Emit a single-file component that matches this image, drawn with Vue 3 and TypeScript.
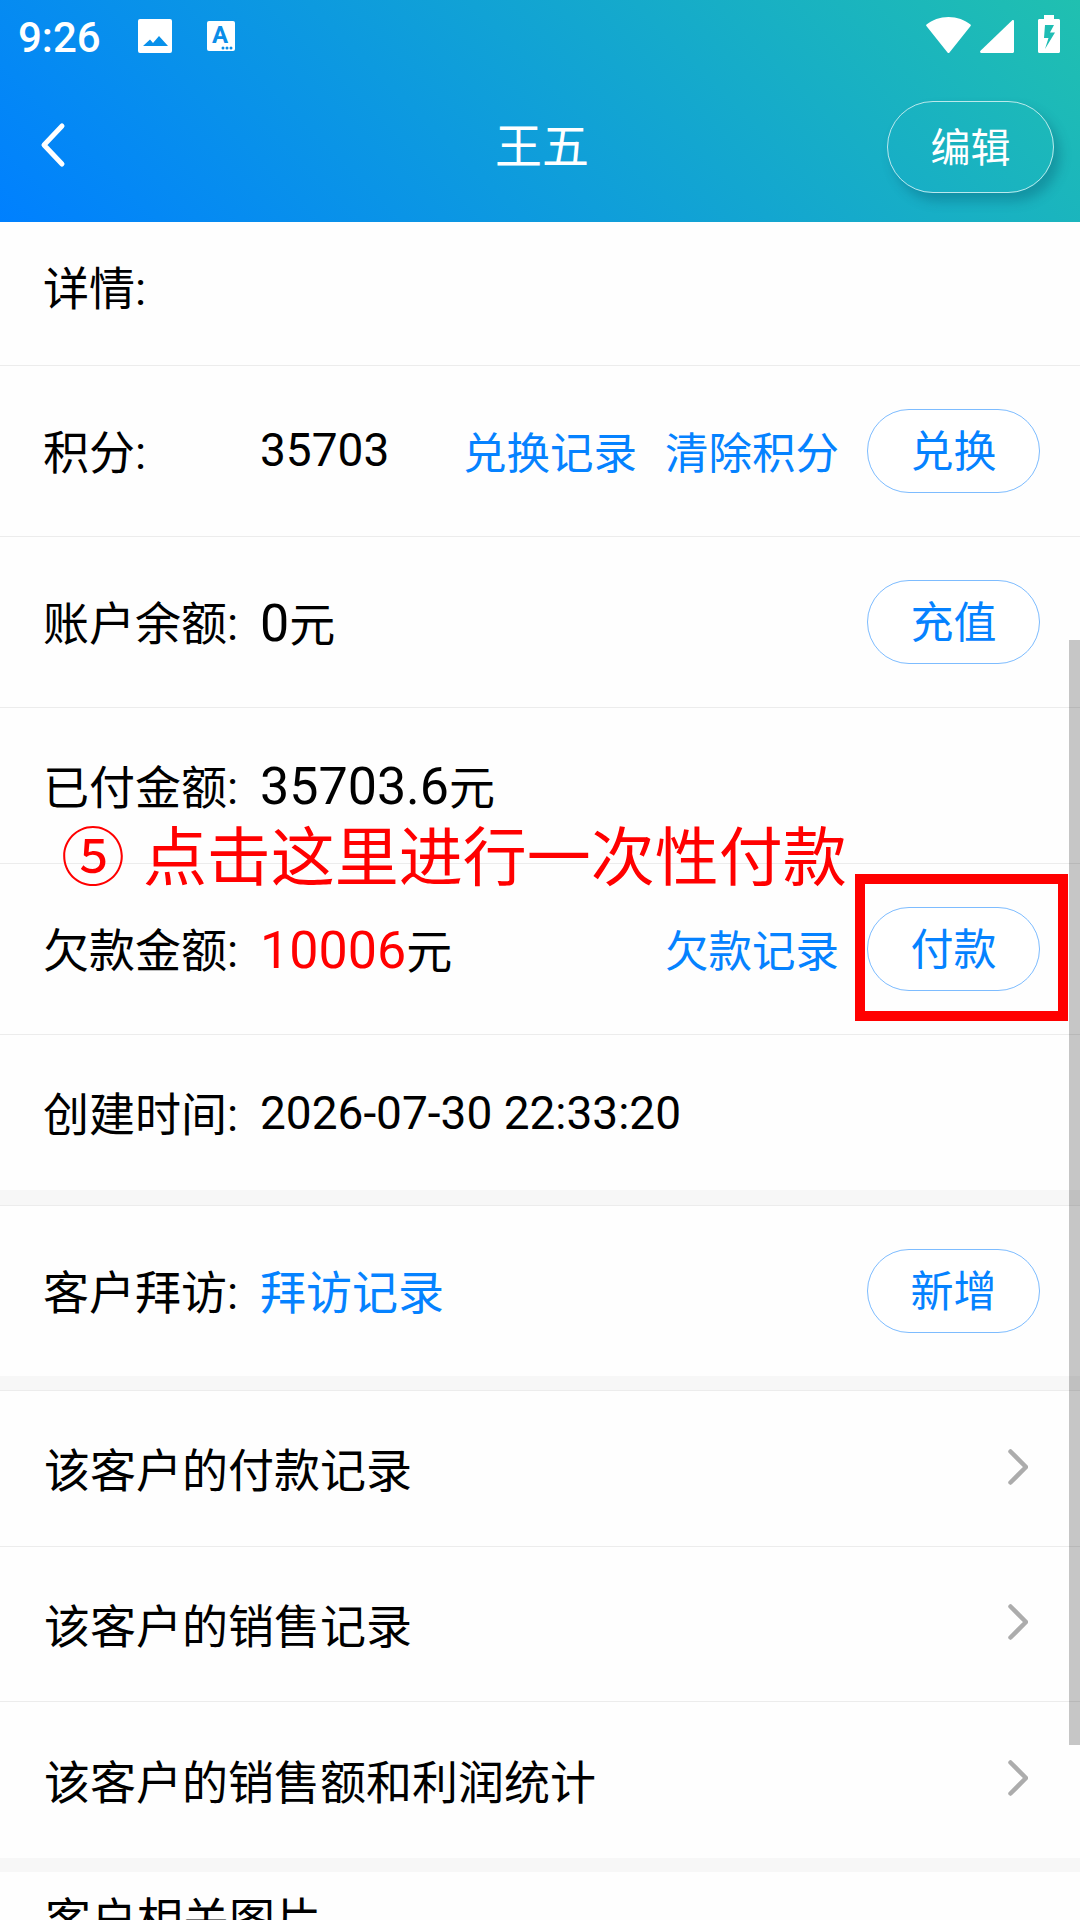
<script setup lang="ts">
// 客户详情页（王五）
interface 菜单 { id: number; 名称: string }

const 菜单列表: 菜单[] = [
  { id: 1, 名称: '该客户的付款记录' },
  { id: 2, 名称: '该客户的销售记录' },
  { id: 3, 名称: '该客户的销售额和利润统计' }
];
</script>

<template>
  <div class="page">
    <header class="top">
      <div class="status-bar">
        <span class="clock">9:26</span>
        <svg class="ic-image" width="34" height="34" viewBox="0 0 34 34">
          <path fill="#fff" fill-rule="evenodd" d="M2 0h30a2 2 0 0 1 2 2v30a2 2 0 0 1-2 2H2a2 2 0 0 1-2-2V2a2 2 0 0 1 2-2zM5 27h25L21 17l-6 7-3-3.500z" />
        </svg>
        <svg class="ic-a" width="28" height="30" viewBox="0 0 28 30">
          <rect width="28" height="30" rx="2" fill="#fff" />
          <text x="13" y="22" class="ic-a-text">A</text>
          <circle cx="16" cy="27" r="1.500" fill="#0b8de8" />
          <circle cx="20" cy="27" r="1.500" fill="#0b8de8" />
          <circle cx="24" cy="27" r="1.500" fill="#0b8de8" />
        </svg>
        <span class="spacer"></span>
        <svg class="ic-wifi" width="45" height="36" viewBox="0 0 45 36">
          <path fill="#fff" d="M.5 7.500C6 3 14 0 22.500 0S39 3 44.500 7.500c.5.500.5 1 .1 1.400L23.500 35.400c-.6.700-1.400.7-2 0L.4 8.900C0 8.500 0 8 .5 7.500z" />
        </svg>
        <svg class="ic-signal" width="34" height="33" viewBox="0 0 34 33">
          <path fill="#fff" d="M32 0.500c1-.9 2-.4 2 .8V31.500c0 .9-.6 1.500-1.500 1.500H1.500C.2 33-.4 31.700.5 30.800z" />
        </svg>
        <svg class="ic-battery" width="22" height="38" viewBox="0 0 22 38">
          <path fill="#fff" fill-rule="evenodd" d="M6 0h10v4h4.500c.9 0 1.500.6 1.500 1.500v31c0 .9-.6 1.500-1.500 1.500h-19C.6 38 0 37.400 0 36.500v-31C0 4.600.6 4 1.500 4H6zM7 10l-1 13h4.500L7 34l10-16.500h-5L16 10z" />
        </svg>
      </div>
      <div class="nav-bar">
        <svg class="back" width="26" height="46" viewBox="0 0 26 46">
          <path d="M22 4 4 23l18 19" fill="none" stroke="#fff" stroke-width="5" stroke-linecap="round" stroke-linejoin="round" />
        </svg>
        <h1 class="title">王五</h1>
        <button class="edit-btn">编辑</button>
      </div>
    </header>

    <main class="content">
      <div class="row row-short">
        <span class="label label-top">详情:</span>
      </div>
      <div class="row">
        <span class="label">积分:</span>
        <span class="value value-up">35703</span>
        <a class="link">兑换记录</a>
        <a class="link">清除积分</a>
        <button class="pill">兑换</button>
      </div>
      <div class="row">
        <span class="label">账户余额:</span>
        <span class="value value-down"><b class="money">0</b>元</span>
        <button class="pill">充值</button>
      </div>
      <div class="row row-mid">
        <span class="label">已付金额:</span>
        <span class="value value-down"><b class="money">35703.6</b>元</span>
      </div>
      <div class="row">
        <span class="label">欠款金额:</span>
        <span class="value value-down"><b class="money debt">10006</b>元</span>
        <a class="link">欠款记录</a>
        <button class="pill">付款</button>
      </div>
      <div class="row row-mid last row-created">
        <span class="label">创建时间:</span>
        <span class="value">2026-07-30 22:33:20</span>
      </div>

      <div class="gap gap-first"></div>
      <div class="row last row-visit">
        <span class="label">客户拜访:</span>
        <span class="value value-down"><a class="link-big">拜访记录</a></span>
        <button class="pill">新增</button>
      </div>

      <div class="gap"></div>
      <div v-for="item in 菜单列表" :key="item.id" class="row row-menu" :class="{ last: item.id === 3 }">
        <span class="menu-text">{{ item.名称 }}</span>
        <svg class="chevron" width="20" height="36" viewBox="0 0 20 36">
          <path d="M2.500 2.500 18 18 2.500 33.500" fill="none" stroke="#acacac" stroke-width="4.500" stroke-linecap="round" stroke-linejoin="round" />
        </svg>
      </div>

      <div class="gap gap-end"></div>
      <div class="row-photo">客户相关图片</div>
    </main>

    <div class="scrollbar"></div>

    <!-- 教程标注 -->
    <div class="tip"><span class="tip-no">⑤</span> 点击这里进行一次性付款</div>
    <div class="tip-box"></div>
  </div>
</template>

<style scoped>
.page {
  position: relative;
  width: 1080px;
  height: 1920px;
  overflow: hidden;
  background: #fefefe;
  color: #000;
  font-family: Roboto, "Noto Sans CJK SC", sans-serif;
}

.top {
  height: 222px;
  box-sizing: border-box;
  background: linear-gradient(45deg, #0080ff, #20c0b0);
}

.status-bar {
  display: flex;
  align-items: flex-start;
  height: 72px;
  padding: 0 20px 0 18px;
  box-sizing: border-box;
}

.clock {
  width: 120px;
  margin-top: 13px;
  font-size: 42px;
  font-weight: 500;
  line-height: 50px;
  color: #fff;
}

.ic-image {
  margin-top: 19px;
}

.ic-a {
  margin: 21px 0 0 35px;
}

.ic-a-text {
  font-family: Roboto, sans-serif;
  font-size: 24px;
  font-weight: 700;
  text-anchor: middle;
  fill: #0b8de8;
}

.spacer {
  flex: 1;
}

.ic-wifi {
  margin-top: 17px;
}

.ic-signal {
  margin: 20px 0 0 9px;
}

.ic-battery {
  margin: 15px 0 0 24px;
}

.nav-bar {
  position: relative;
  display: flex;
  align-items: center;
  justify-content: space-between;
  height: 150px;
  padding: 0 26px 0 40px;
  box-sizing: border-box;
}

.back {
  margin-top: -4px;
}

.title {
  position: absolute;
  left: 4px;
  right: 0;
  margin: 0;
  text-align: center;
  font-size: 47px;
  font-weight: 400;
  line-height: 60px;
  color: #fff;
  pointer-events: none;
}

.edit-btn {
  width: 167px;
  height: 92px;
  padding: 0 0 4px;
  background: transparent;
  border: 1px solid rgba(255, 255, 255, 0.7);
  border-radius: 46px;
  box-shadow: 6px 8px 12px rgba(0, 60, 90, 0.28);
  color: #fff;
  font-family: inherit;
  font-size: 40px;
}

.row {
  display: flex;
  align-items: center;
  height: 171px;
  padding: 0 40px 0 43px;
  box-sizing: border-box;
  border-bottom: 1px solid #ececec;
  background: #fefefe;
}

.row-short {
  height: 144px;
}

.row-mid {
  height: 156px;
}

.row-created {
  height: 155px;
}

.row-visit {
  height: 170px;
}

.row-menu {
  height: 155.500px;
  padding-left: 44px;
}

.last {
  border-bottom: none;
}

.label {
  flex: none;
  width: 217px;
  margin-top: 4px;
  font-size: 46px;
  line-height: 60px;
  white-space: nowrap;
}

.label-top {
  margin-top: -9px;
}

.value {
  flex: 1;
  font-size: 46px;
  line-height: 60px;
  white-space: nowrap;
}

.value-up {
  margin-top: -2px;
}

.value-down {
  margin-top: 4px;
}

.money {
  font-weight: 400;
  font-size: 52px;
}

.debt {
  color: #ff0000;
}

.link {
  margin: 8px 28px 0 0;
  color: #0582ff;
  font-size: 43.500px;
  line-height: 60px;
}

.link-big {
  color: #0582ff;
}

.pill {
  flex: none;
  width: 173px;
  height: 84px;
  padding: 0 0 7px;
  background: #fff;
  border: 1px solid #7dbcff;
  border-radius: 42px;
  color: #0582ff;
  font-family: inherit;
  font-size: 43px;
}

.gap {
  height: 15px;
  box-sizing: border-box;
  background: #f7f7f7;
  border-bottom: 1px solid #ececec;
}

.gap-first {
  height: 16px;
}

.gap-end {
  height: 14px;
  border: none;
}

.menu-text {
  flex: 1;
  margin-top: 6px;
  font-size: 46px;
  line-height: 60px;
}

.chevron {
  margin: -3px 12px 0 0;
}

.row-photo {
  padding: 18px 45px 0;
  font-size: 46px;
  line-height: 60px;
  white-space: nowrap;
}

.scrollbar {
  position: absolute;
  top: 640px;
  right: 0;
  width: 11px;
  height: 1105px;
  background: rgba(0, 0, 0, 0.22);
}

.tip {
  position: absolute;
  left: 61px;
  top: 814px;
  color: #ff0000;
  font-size: 64px;
  line-height: 90px;
  white-space: nowrap;
}

.tip-no {
  margin-right: 2px;
}

.tip-box {
  position: absolute;
  left: 855px;
  top: 874px;
  width: 213px;
  height: 147px;
  box-sizing: border-box;
  border: 10px solid #ff0000;
}
</style>

<style>
html,
body {
  margin: 0;
  background: #fff;
}
</style>
